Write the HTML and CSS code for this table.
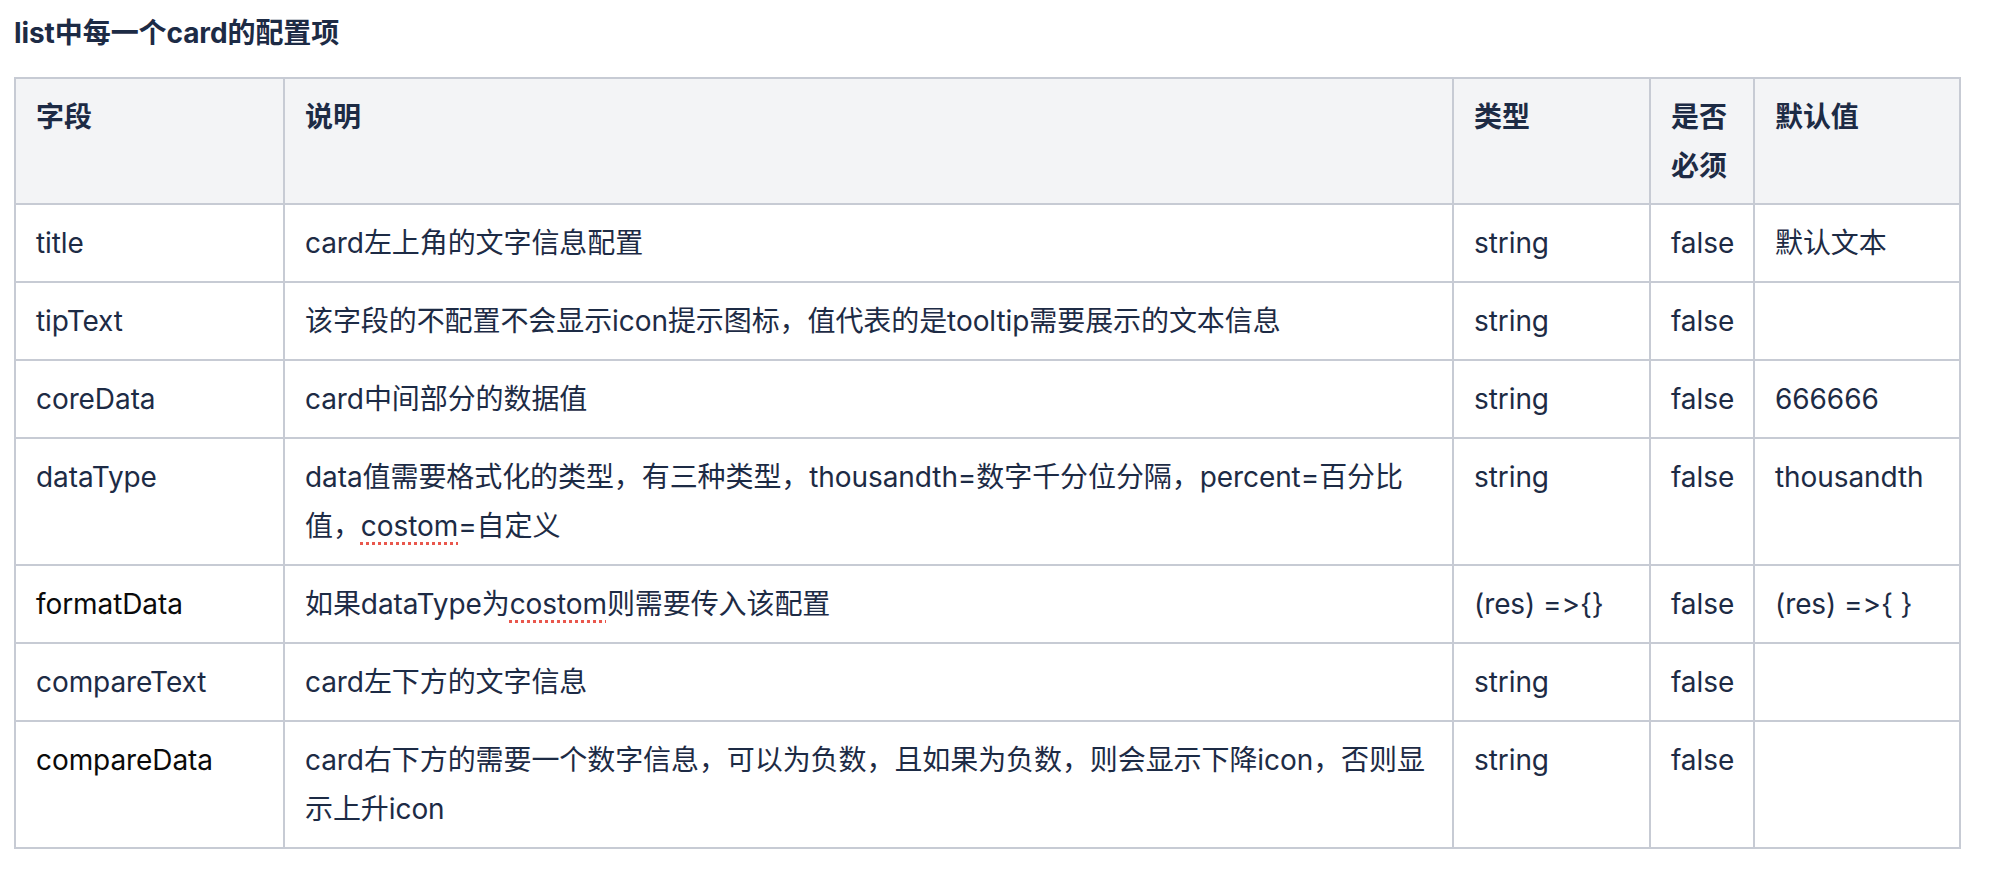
FILE: index.html
```html
<!DOCTYPE html>
<html lang="zh-CN">
<head>
<meta charset="utf-8">
<title>list中每一个card的配置项</title>
<link rel="stylesheet" href="styles.css">
</head>
<body>
<div class="doc">
  <h4 class="doc-title">list中每一个card的配置项</h4>
  <table class="cfg-table">
    <colgroup>
      <col class="c-field">
      <col class="c-desc">
      <col class="c-type">
      <col class="c-req">
      <col class="c-def">
    </colgroup>
    <thead>
      <tr>
        <th>字段</th>
        <th>说明</th>
        <th>类型</th>
        <th>是否必须</th>
        <th>默认值</th>
      </tr>
    </thead>
    <tbody>
      <tr>
        <td>title</td>
        <td>card左上角的文字信息配置</td>
        <td>string</td>
        <td>false</td>
        <td>默认文本</td>
      </tr>
      <tr>
        <td>tipText</td>
        <td>该字段的不配置不会显示icon提示图标，值代表的是tooltip需要展示的文本信息</td>
        <td>string</td>
        <td>false</td>
        <td></td>
      </tr>
      <tr>
        <td>coreData</td>
        <td>card中间部分的数据值</td>
        <td>string</td>
        <td>false</td>
        <td>666666</td>
      </tr>
      <tr>
        <td>dataType</td>
        <td>data值需要格式化的类型，有三种类型，thousandth=数字千分位分隔，percent=百分比<br>值，<span class="typo">costom</span>=自定义</td>
        <td>string</td>
        <td>false</td>
        <td>thousandth</td>
      </tr>
      <tr>
        <td class="ink">formatData</td>
        <td>如果dataType为<span class="typo">costom</span>则需要传入该配置</td>
        <td>(res) =&gt;{}</td>
        <td>false</td>
        <td>(res) =&gt;{ }</td>
      </tr>
      <tr>
        <td>compareText</td>
        <td>card左下方的文字信息</td>
        <td>string</td>
        <td>false</td>
        <td></td>
      </tr>
      <tr>
        <td class="ink">compareData</td>
        <td>card右下方的需要一个数字信息，可以为负数，且如果为负数，则会显示下降icon，否则显<br>示上升icon</td>
        <td>string</td>
        <td>false</td>
        <td></td>
      </tr>
    </tbody>
  </table>
</div>
</body>
</html>
```
FILE: styles.css
```css
html, body {
  margin: 0;
  padding: 0;
  background: #ffffff;
}

body {
  font-family: Inter, "Noto Sans CJK SC", sans-serif;
  font-size: 28px;
  line-height: 49px;
  color: #1d2b45;
  font-variant-ligatures: none;
  font-feature-settings: "calt" 0, "liga" 0;
  letter-spacing: -0.08px;
}

.doc {
  padding: 9px 14px;
}

.doc-title {
  margin: 0 0 19px 0;
  font-size: 28px;
  line-height: 49px;
  font-weight: 700;
  color: #1d2b45;
}

.cfg-table {
  border-collapse: collapse;
  table-layout: fixed;
  width: 1945px;
}

.c-field { width: 269px; }
.c-desc  { width: 1169px; }
.c-type  { width: 197px; }
.c-req   { width: 104px; }
.c-def   { width: 206px; }

.cfg-table th,
.cfg-table td {
  border: 2px solid #c7cbd4;
  padding: 14px 8px 13px 20px;
  text-align: left;
  vertical-align: top;
  line-height: 49px;
}

.cfg-table th {
  background: #f3f4f6;
  font-weight: 700;
  padding-bottom: 12px;
}

.cfg-table td.ink {
  color: #0a0a0a;
}

.typo {
  text-decoration-line: underline;
  text-decoration-style: dotted;
  text-decoration-color: #e9574d;
  text-decoration-thickness: 3px;
  text-underline-offset: 6px;
}
```
